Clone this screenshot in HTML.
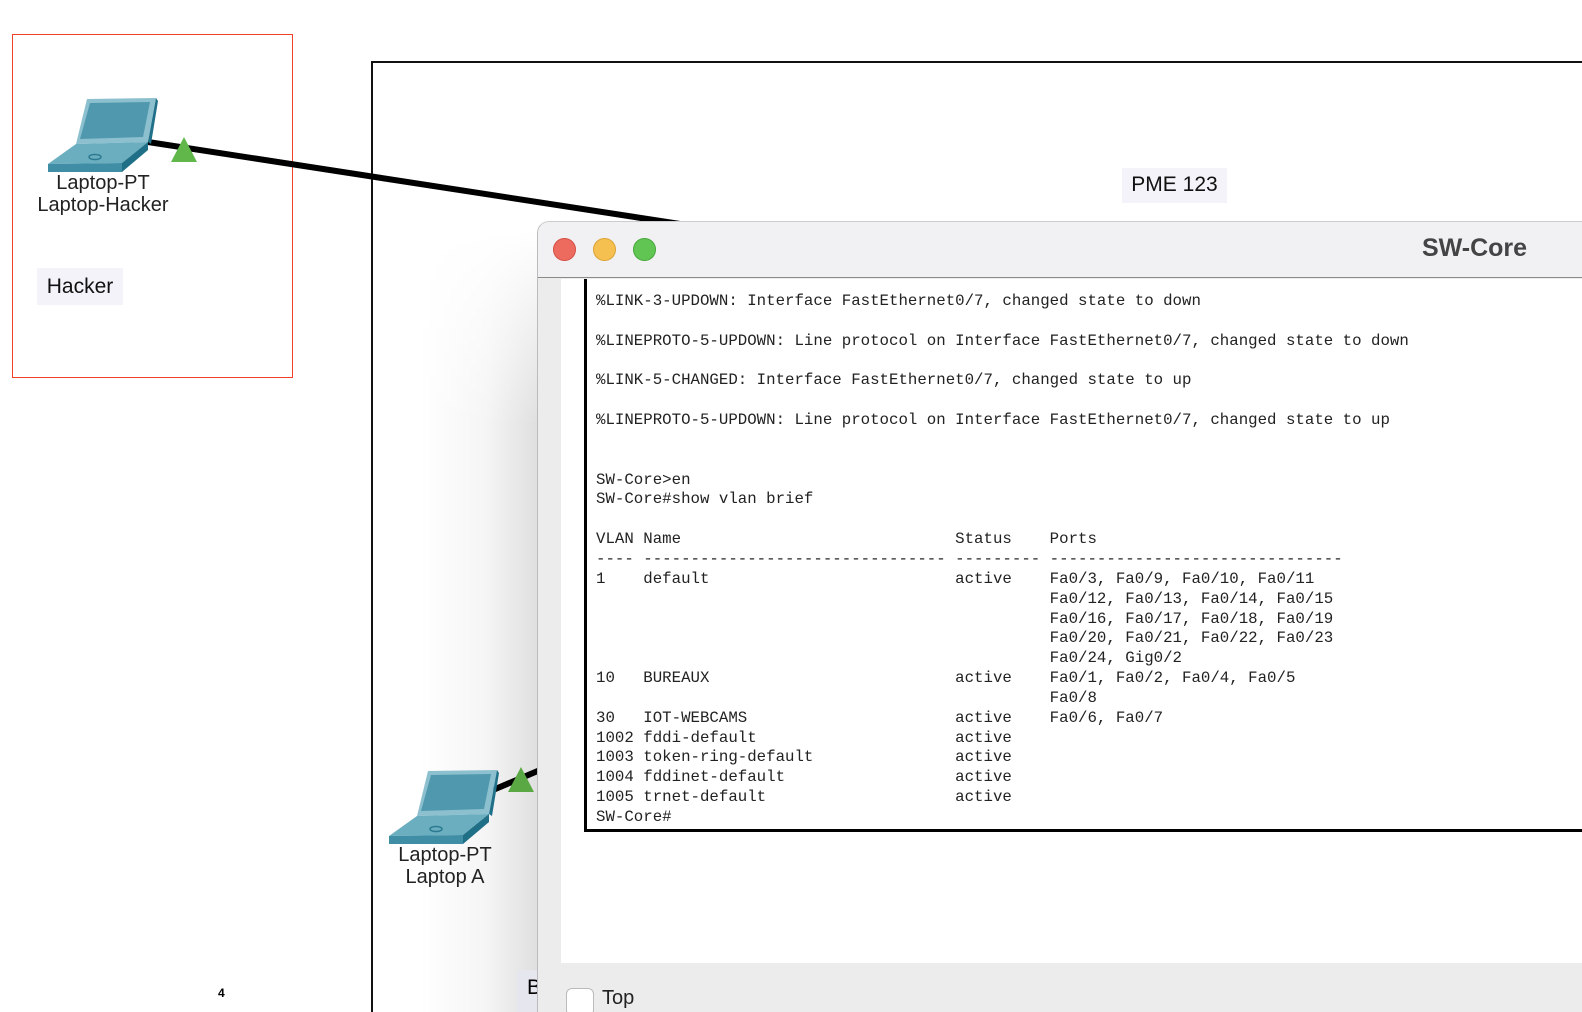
<!DOCTYPE html>
<html><head><meta charset="utf-8"><style>
html,body{margin:0;width:1582px;height:1012px;overflow:hidden}
body{background:#fff;position:relative;font-family:"Liberation Sans",sans-serif}
.abs{position:absolute}
.lbl{position:absolute;font-size:20px;color:#222;text-align:center;line-height:22px}
pre{margin:0;font-family:"Liberation Mono",monospace;font-size:15.75px;line-height:19.85px;color:#222}
</style></head><body>
<div class="abs" style="left:12px;top:34px;width:279px;height:342px;border:1.5px solid #f0402a"></div>
<div class="abs" style="left:371px;top:61px;width:1211px;height:951px;border-left:2px solid #111;border-top:2px solid #111;box-sizing:border-box"></div>
<div class="abs" style="left:420px;top:230px;width:120px;height:782px;background:linear-gradient(to right,rgba(0,0,0,0),rgba(0,0,0,0.04) 55%,rgba(0,0,0,0.13));-webkit-mask-image:linear-gradient(to bottom,transparent,#000 25%)"></div>
<svg class="abs" style="left:0;top:0" width="1582" height="1012">
<line x1="148" y1="142" x2="680" y2="224" stroke="#000" stroke-width="6"/>
<polygon points="171,162 184,137 197,162" fill="#62b74a"/>
<line x1="493" y1="790" x2="540" y2="770" stroke="#000" stroke-width="6"/>
<polygon points="508,792 521,767 534,792" fill="#5aa843"/>
<g id="lt">
<polygon points="87,99 156,98 148,142 76,144" fill="#8dc0cf"/>
<polygon points="90,103 150,102 143,137 80,139" fill="#4f98ad"/>
<polygon points="148,142 156,98 158,101 151,144" fill="#1f7088"/>
<polygon points="76,144 148,142 122,163 48,164" fill="#6aaec0"/>
<polygon points="48,164 122,163 122,172 48,172" fill="#3f8ea5"/>
<polygon points="122,163 148,142 148,150 122,172" fill="#1f6f86"/>
<ellipse cx="95" cy="157" rx="6" ry="2.5" fill="none" stroke="#2d7a90" stroke-width="1.5"/>
</g>
<use href="#lt" transform="translate(341,672)"/>
<text x="218" y="997" font-size="12" font-weight="bold">4</text>
</svg>
<div class="lbl" style="left:20px;top:172px;width:166px">Laptop-PT<br>Laptop-Hacker</div>
<div class="abs" style="left:37px;top:268px;width:86px;height:37px;background:#f3f3f9;font-size:21px;line-height:37px;text-align:center;color:#111">Hacker</div>
<div class="lbl" style="left:362px;top:844px;width:166px">Laptop-PT<br>Laptop A</div>
<div class="abs" style="left:1122px;top:168px;width:105px;height:35px;background:#f3f3f9;font-size:21px;line-height:34px;text-align:center;color:#111">PME 123</div>
<div class="abs" style="left:517px;top:970px;width:20px;height:42px;background:#e6e6ee;font-size:21px;line-height:36px;padding-left:10px;overflow:hidden">B</div>
<div class="abs" style="left:537px;top:221px;width:1045px;height:791px;background:#ececec;border-left:1px solid #bbb;border-top:1px solid #ccc;border-radius:12px 0 0 0;overflow:hidden;box-sizing:border-box">
 <div class="abs" style="left:0;top:0;width:1100px;height:55px;background:#f1f1f3;border-bottom:1px solid #8a8a8a"></div>
 <div class="abs" style="left:15px;top:16px;width:23px;height:23px;border-radius:50%;background:#ed6a5e;box-shadow:inset 0 0 0 1px #d5544a"></div>
 <div class="abs" style="left:55px;top:16px;width:23px;height:23px;border-radius:50%;background:#f5c04f;box-shadow:inset 0 0 0 1px #dba53d"></div>
 <div class="abs" style="left:95px;top:16px;width:23px;height:23px;border-radius:50%;background:#61c554;box-shadow:inset 0 0 0 1px #4ca941"></div>
 <div class="abs" style="left:884px;top:10px;font-size:25px;font-weight:bold;color:#444;line-height:32px">SW-Core</div>
 <div class="abs" style="left:23px;top:57px;width:1100px;height:684px;background:#fff"></div>
 <div class="abs" style="left:46px;top:57px;width:1100px;height:550px;border-left:3px solid #000;border-bottom:3px solid #000;background:#fff">
<pre style="position:absolute;left:9px;top:13px">%LINK-3-UPDOWN: Interface FastEthernet0/7, changed state to down

%LINEPROTO-5-UPDOWN: Line protocol on Interface FastEthernet0/7, changed state to down

%LINK-5-CHANGED: Interface FastEthernet0/7, changed state to up

%LINEPROTO-5-UPDOWN: Line protocol on Interface FastEthernet0/7, changed state to up


SW-Core&gt;en
SW-Core#show vlan brief

VLAN Name                             Status    Ports
---- -------------------------------- --------- -------------------------------
1    default                          active    Fa0/3, Fa0/9, Fa0/10, Fa0/11
                                                Fa0/12, Fa0/13, Fa0/14, Fa0/15
                                                Fa0/16, Fa0/17, Fa0/18, Fa0/19
                                                Fa0/20, Fa0/21, Fa0/22, Fa0/23
                                                Fa0/24, Gig0/2
10   BUREAUX                          active    Fa0/1, Fa0/2, Fa0/4, Fa0/5
                                                Fa0/8
30   IOT-WEBCAMS                      active    Fa0/6, Fa0/7
1002 fddi-default                     active    
1003 token-ring-default               active    
1004 fddinet-default                  active    
1005 trnet-default                    active    
SW-Core#</pre>
 </div>
 <div class="abs" style="left:28px;top:766px;width:26px;height:26px;border:1px solid #bbb;border-radius:6px;background:#fff"></div>
 <div class="abs" style="left:64px;top:764px;font-size:20px;color:#222;line-height:24px">Top</div>
</div>
</body></html>
